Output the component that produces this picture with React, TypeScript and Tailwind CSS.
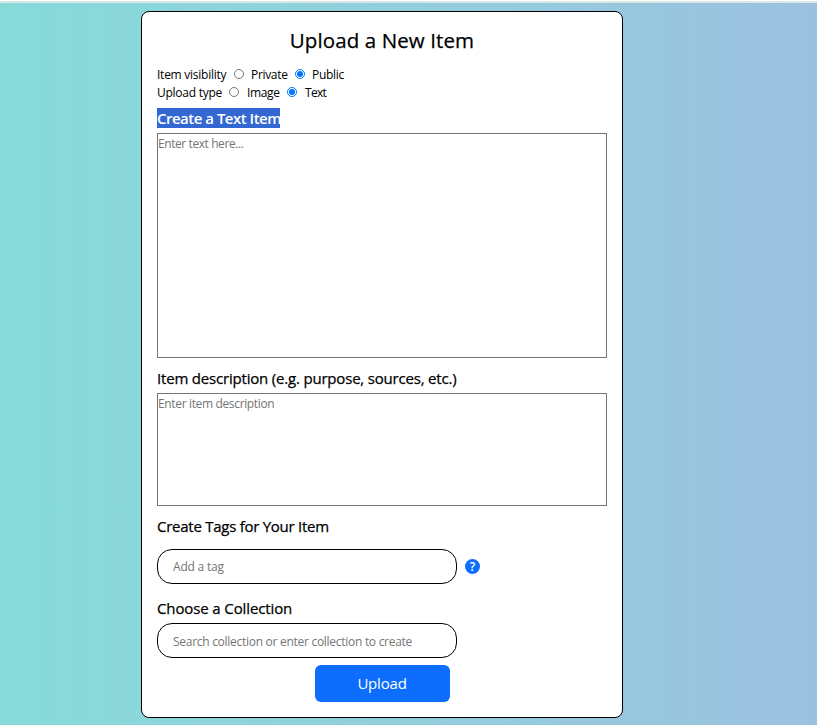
const FONT = "font-['Segoe_UI','Open_Sans','Noto_Sans',sans-serif]";

export default function App() {
  return (
    <div className={`h-[727px] w-full overflow-hidden bg-white pt-px text-black ${FONT}`}>
      <div className="h-0.5 bg-[#d8e7e5]" />
      <div className="flex h-[722px] justify-center bg-linear-to-r from-[#86dbd9] to-[#9cc1e0] pt-2 pr-[53px]">
        <form className="flex h-[707px] w-[482px] flex-col rounded-[8px] border border-black bg-white px-[15px]">
          <h1 className="mt-3 text-center text-[20.5px] leading-8 font-medium tracking-[0.1px] [-webkit-text-stroke:0.25px_black]">Upload a New Item</h1>

          <div className="mt-[9px] flex h-[18px] items-center text-[12px] leading-[18px] whitespace-nowrap">
            <span className="mt-px w-[77px] tracking-[-0.25px]">Item visibility</span>
            <input type="radio" name="visibility" className="size-[10px]" />
            <span className="mt-px ml-[7px] w-[44px] tracking-[-0.32px]">Private</span>
            <input type="radio" name="visibility" defaultChecked className="size-[10px]" />
            <span className="mt-px ml-[7px] tracking-[-0.32px]">Public</span>
          </div>
          <div className="flex h-[18px] items-center text-[12px] leading-[18px] whitespace-nowrap">
            <span className="mt-px w-[72px] tracking-[-0.25px]">Upload type</span>
            <input type="radio" name="type" className="size-[10px]" />
            <span className="mt-px ml-2 w-[40px] tracking-[-0.35px]">Image</span>
            <input type="radio" name="type" defaultChecked className="size-[10px]" />
            <span className="mt-px ml-2 tracking-[-0.7px]">Text</span>
          </div>

          <h2 className="mt-[7px] h-5 w-[123px] shrink-0 bg-[#3367d1] text-[15px] leading-[21px] font-semibold tracking-[-0.5px] whitespace-nowrap text-white">Create a Text Item</h2>
          <textarea
            placeholder="Enter text here..."
            className="mt-[5px] h-[225px] w-[450px] shrink-0 resize-none border border-[#767676] text-[12px] leading-[19px] tracking-[-0.42px] placeholder:text-[#757575]"
          />

          <h2 className="mt-[10px] h-5 text-[15px] leading-5 font-medium tracking-[-0.19px] whitespace-nowrap [-webkit-text-stroke:0.25px_black]">Item description (e.g. purpose, sources, etc.)</h2>
          <textarea
            placeholder="Enter item description"
            className="mt-[5px] h-[113px] w-[450px] shrink-0 resize-none border border-[#767676] text-[12px] leading-[19px] tracking-[-0.35px] placeholder:text-[#757575]"
          />

          <h2 className="mt-[10px] h-5 text-[15px] leading-5 font-medium tracking-[-0.26px] whitespace-nowrap [-webkit-text-stroke:0.25px_black]">Create Tags for Your Item</h2>
          <div className="mt-[13px] flex items-center gap-2">
            <input placeholder="Add a tag" className="h-[35px] w-[300px] rounded-[15px] border border-black px-[15px] text-[12px] tracking-[-0.2px] placeholder:text-[#757575]" />
            <span className="flex size-[15px] items-center justify-center rounded-full bg-[#0d6efd] text-[12px] leading-none font-semibold text-white">?</span>
          </div>

          <h2 className="mt-[14px] h-5 text-[15px] leading-5 font-medium tracking-[-0.12px] whitespace-nowrap [-webkit-text-stroke:0.25px_black]">Choose a Collection</h2>
          <input placeholder="Search collection or enter collection to create" className="mt-[5px] h-[35px] w-[300px] rounded-[15px] border border-black px-[15px] pt-px text-[12px] tracking-[-0.28px] placeholder:text-[#757575]" />

          <button type="button" className="mt-[7px] h-[37px] w-[135px] self-center rounded-[6px] bg-[#0d6efd] text-[15px] tracking-[-0.2px] text-white">Upload</button>
        </form>
      </div>
    </div>
  );
}
